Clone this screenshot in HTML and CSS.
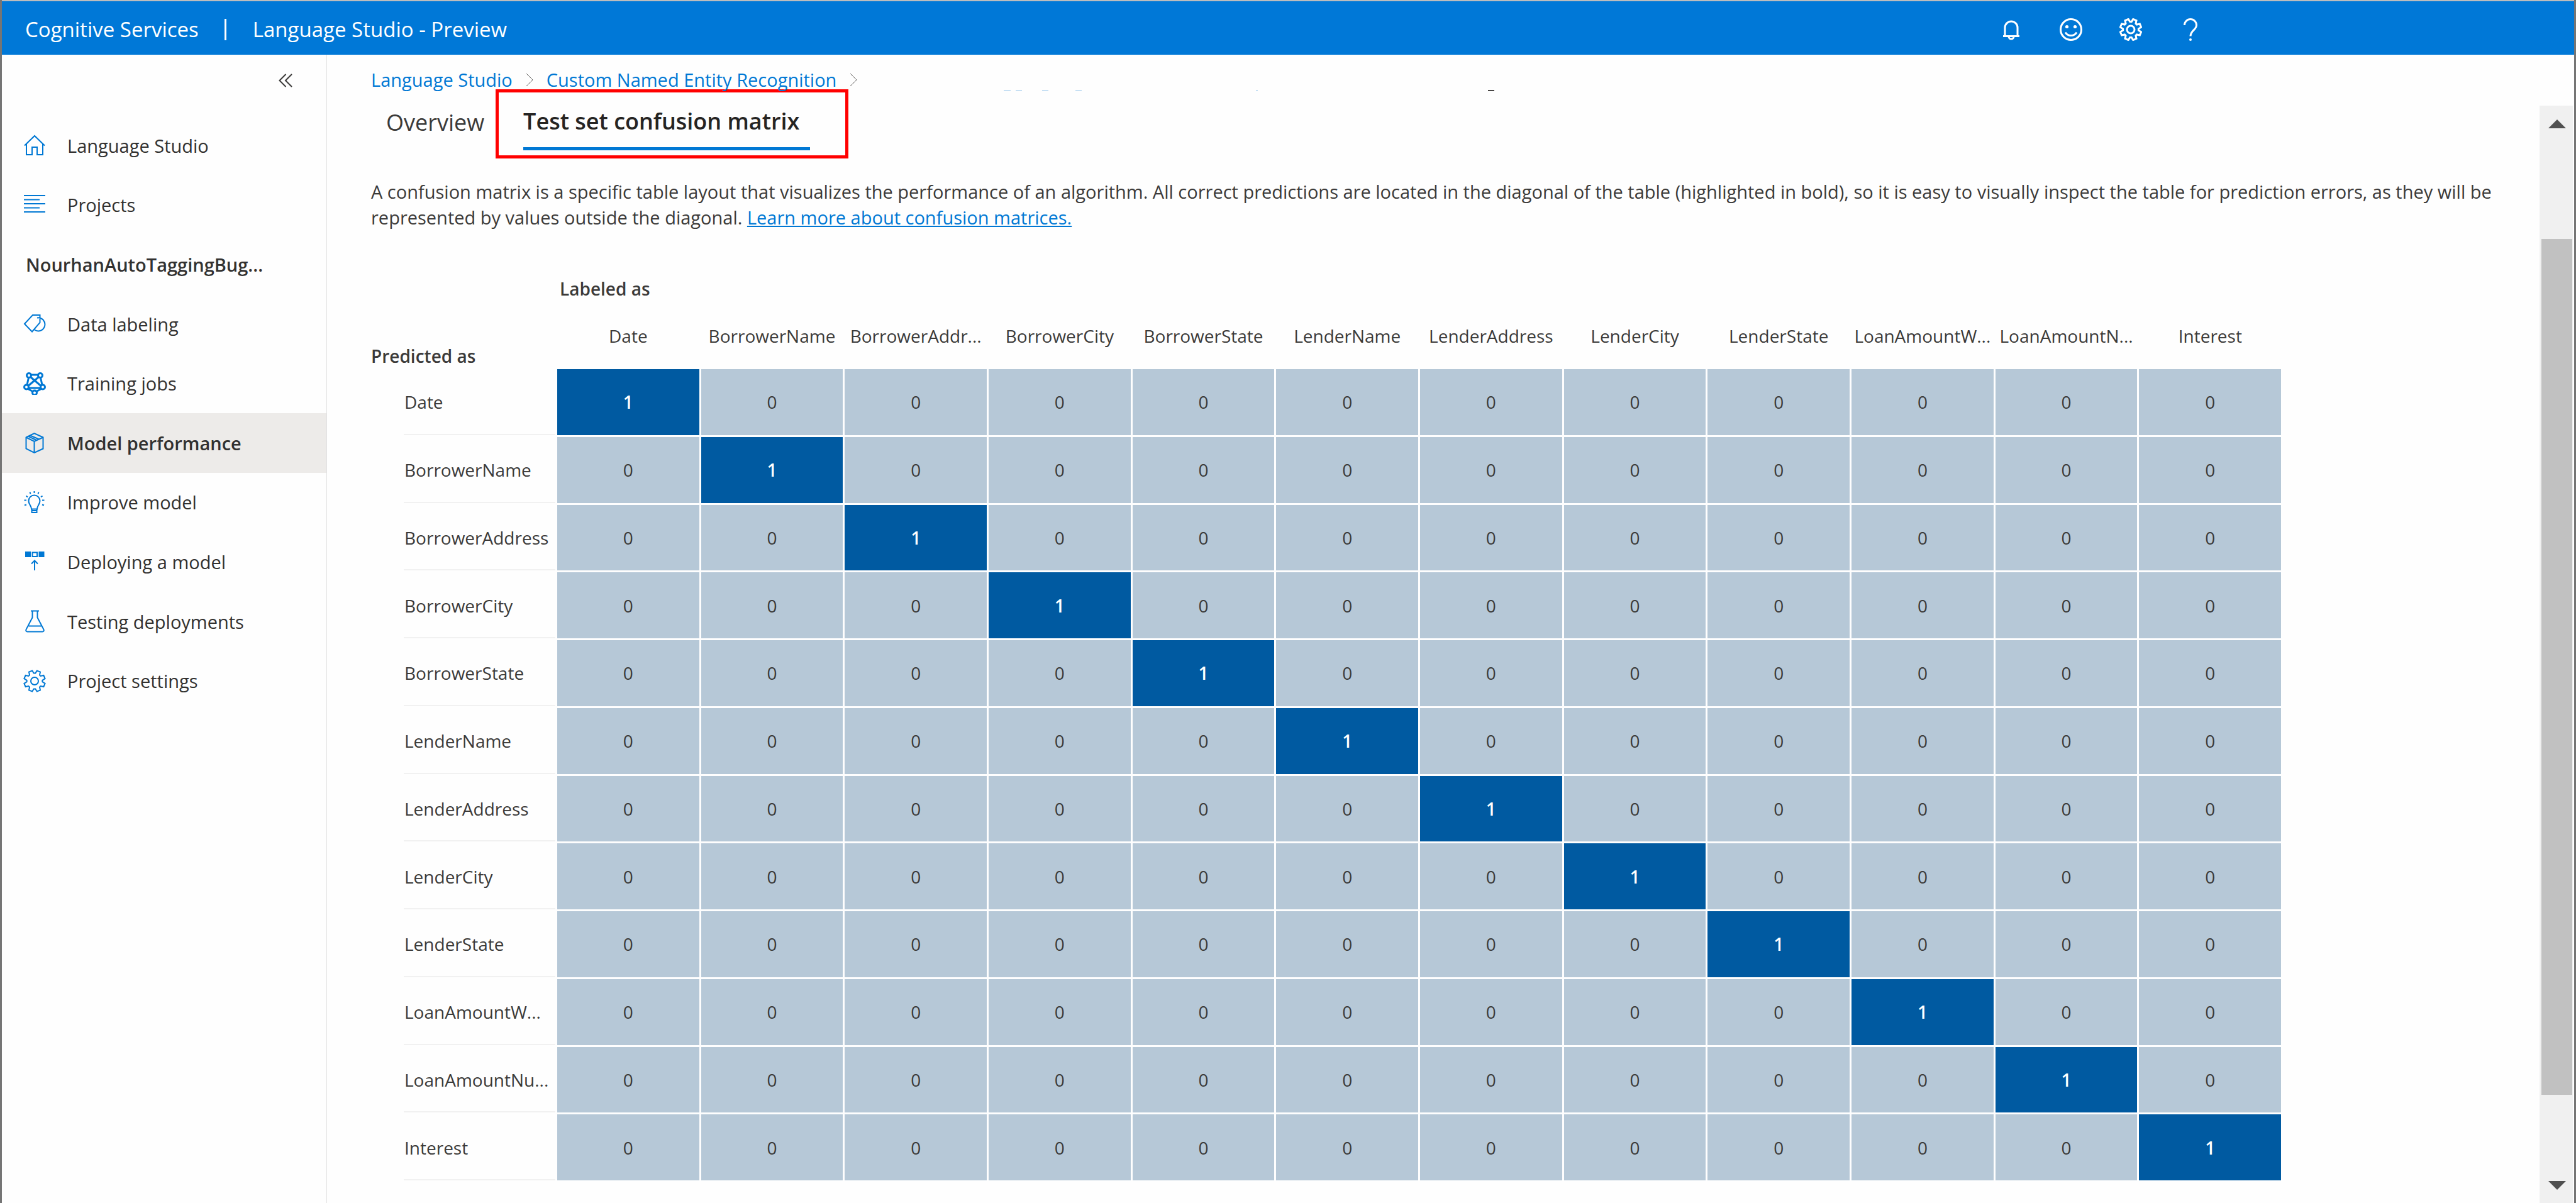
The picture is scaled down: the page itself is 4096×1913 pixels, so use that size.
FILE: index.html
```html
<!DOCTYPE html>
<html lang="en">
<head>
<meta charset="utf-8">
<title>Language Studio - Preview</title>
<link rel="stylesheet" href="styles.css">
</head>
<body>
<svg class="sprite" aria-hidden="true">
  <symbol id="gear" viewBox="0 0 36 36">
    <path d="M19.2 5.6 21.8 1.4 27 3.6 26 8.4 27.6 10 32.4 9 34.6 14.2 30.4 16.8V19.2L34.6 21.8 32.4 27 27.6 26 26 27.6 27 32.4 21.8 34.6 19.2 30.4H16.8L14.2 34.6 9 32.4 10 27.6 8.4 26 3.6 27 1.4 21.8 5.6 19.2V16.8L1.4 14.2 3.6 9 8.4 10 10 8.4 9 3.6 14.2 1.4 16.8 5.6Z"/>
    <circle cx="18" cy="18" r="6"/>
  </symbol>
</svg>
<header class="topbar">
  <a class="brand" href="#">Cognitive Services</a>
  <span class="divider"></span>
  <a class="product" href="#">Language Studio - Preview</a>
  <div class="tools">
    <button type="button" aria-label="Notifications"><svg viewBox="0 0 36 36"><path d="M5 28.500H31M8 28V15a10 10 0 0 1 20 0V28M14 29a4 4 0 0 0 8 0"/></svg></button>
    <button type="button" aria-label="Feedback"><svg viewBox="0 0 36 36"><circle cx="18" cy="18" r="16.500"/><path d="M9 22.500a10.500 10.500 0 0 0 18 0"/><circle class="solid" cx="11.500" cy="13.500" r="2.600"/><circle class="solid" cx="24.500" cy="13.500" r="2.600"/></svg></button>
    <button type="button" aria-label="Settings"><svg viewBox="0 0 36 36"><use href="#gear"/></svg></button>
    <button type="button" aria-label="Help"><svg viewBox="0 0 36 36"><path d="M8.500 11a9.500 9.500 0 0 1 19 0c0 7.500-9.500 8.500-9.500 17.500"/><circle class="solid" cx="18" cy="34" r="2"/></svg></button>
  </div>
</header>
<div class="shell">
  <aside class="sidebar">
    <button class="collapse" type="button" aria-label="Collapse menu"><svg viewBox="0 0 22 22"><path d="M11.500 1 1.500 11l10 10M21 1 11 11l10 10"/></svg></button>
    <nav class="menu">
      <a href="#"><svg viewBox="0 0 36 36"><path d="M2 18.500 18 3l16 15.500M5 16V33h9V21h8V33h9V16"/></svg>Language Studio</a>
      <a href="#"><svg viewBox="0 0 36 36"><path d="M1 3H35M1 9.500H26M1 16H35M1 22.500H26M1 29H35"/></svg>Projects</a>
      <h2>NourhanAutoTaggingBug...</h2>
      <a href="#"><svg viewBox="0 0 36 36"><path d="M2 18 15 4H26.500V16L14 30.500ZM22 8.500a10.500 10.500 0 1 1-4 19"/></svg>Data labeling</a>
      <a href="#"><svg viewBox="0 0 36 36"><g class="thick"><circle cx="9" cy="5" r="3.500"/><circle cx="27" cy="5" r="3.500"/><circle cx="5" cy="23.500" r="3.500"/><circle cx="31" cy="23.500" r="3.500"/><circle cx="18" cy="32.500" r="3.500"/><path d="M12.500 4H23.500M8.500 8.500 6 20M27.500 8.500 30 20M11.500 7.500 28 21.500M24.500 7.500 8 21.500M8.500 25H27.500M7.500 26.500 15 30.500M28.500 26.500 21 30.500"/></g></svg>Training jobs</a>
      <a class="current" href="#" aria-current="page"><svg viewBox="0 0 36 36"><path d="M4.500 9.500 17.500 3 31.500 9.500V27.500L17.500 34 4.500 27.500ZM4.500 9.500 17.500 16 31.500 9.500M17.500 16V34M11 6.500 25 12.500M8 7.800 21 14"/></svg>Model performance</a>
      <a href="#"><svg viewBox="0 0 36 36"><path d="M13 28.500C13 23 8.500 21.500 8.500 15.500a9 9 0 0 1 18 0C26.500 21.500 22 23 22 28.500ZM13.500 28.500V34H21.500V28.500M13.500 31H21.500M17.500 0V3M10.500 1.500 11.500 4.500M24.500 1.500 23.500 4.500M4.500 7.500 7 9.500M30.500 7.500 28 9.500M1.500 14.500H5M33.500 14.500H30M2 22.500 5 21.500M33 22.500 30 21.500"/></svg>Improve model</a>
      <a href="#"><svg viewBox="0 0 36 36"><path class="solid" d="M3 2H12V11H3ZM24.500 2H33.500V11H24.500Z"/><path d="M14.500 3.500H22V10H14.500ZM18 17V32M13 21.500 18 16.500 23 21.500"/></svg>Deploying a model</a>
      <a href="#"><svg viewBox="0 0 36 36"><path d="M12 1.500H25M14.500 2V12L4.500 31Q3.500 34.500 6.500 34.500H30.500Q33.500 34.500 32.500 31L22.500 12V2M8.500 25.500H28.500"/></svg>Testing deployments</a>
      <a href="#"><svg viewBox="0 0 36 36"><use href="#gear"/></svg>Project settings</a>
    </nav>
  </aside>
  <main class="content">
    <nav class="crumbs" aria-label="Breadcrumb">
      <a href="#">Language Studio</a>
      <svg viewBox="0 0 12 22"><path d="M1 1 11 11 1 21"/></svg>
      <a href="#">Custom Named Entity Recognition</a>
      <svg viewBox="0 0 12 22"><path d="M1 1 11 11 1 21"/></svg>
      <svg class="hidden-crumbs" viewBox="0 0 784 4" aria-hidden="true"><path class="pale" d="M0 1H11M19 1H29M61 1H71M114 1H124M401 1H404"/><path class="dark" d="M770 1H780"/></svg>
    </nav>
    <div class="tabs" role="tablist">
      <button type="button" role="tab" aria-selected="false">Overview</button>
      <div class="callout"><button class="selected" type="button" role="tab" aria-selected="true">Test set confusion matrix</button></div>
    </div>
    <p class="intro">A confusion matrix is a specific table layout that visualizes the performance of an algorithm. All correct predictions are located in the diagonal of the table (highlighted in bold), so it is easy to visually inspect the table for prediction errors, as they will be represented by values outside the diagonal. <a href="#">Learn more about confusion matrices.</a></p>
    <table class="matrix">
      <thead>
        <tr class="axis"><td></td><th colspan="12" scope="colgroup">Labeled as</th></tr>
        <tr class="names"><th class="predicted">Predicted as</th><th scope="col">Date</th><th scope="col">BorrowerName</th><th scope="col">BorrowerAddr...</th><th scope="col">BorrowerCity</th><th scope="col">BorrowerState</th><th scope="col">LenderName</th><th scope="col">LenderAddress</th><th scope="col">LenderCity</th><th scope="col">LenderState</th><th scope="col">LoanAmountW...</th><th scope="col">LoanAmountN...</th><th scope="col">Interest</th></tr>
      </thead>
      <tbody>
        <tr><th scope="row">Date</th><td class="hit">1</td><td>0</td><td>0</td><td>0</td><td>0</td><td>0</td><td>0</td><td>0</td><td>0</td><td>0</td><td>0</td><td>0</td></tr>
        <tr><th scope="row">BorrowerName</th><td>0</td><td class="hit">1</td><td>0</td><td>0</td><td>0</td><td>0</td><td>0</td><td>0</td><td>0</td><td>0</td><td>0</td><td>0</td></tr>
        <tr><th scope="row">BorrowerAddress</th><td>0</td><td>0</td><td class="hit">1</td><td>0</td><td>0</td><td>0</td><td>0</td><td>0</td><td>0</td><td>0</td><td>0</td><td>0</td></tr>
        <tr><th scope="row">BorrowerCity</th><td>0</td><td>0</td><td>0</td><td class="hit">1</td><td>0</td><td>0</td><td>0</td><td>0</td><td>0</td><td>0</td><td>0</td><td>0</td></tr>
        <tr><th scope="row">BorrowerState</th><td>0</td><td>0</td><td>0</td><td>0</td><td class="hit">1</td><td>0</td><td>0</td><td>0</td><td>0</td><td>0</td><td>0</td><td>0</td></tr>
        <tr><th scope="row">LenderName</th><td>0</td><td>0</td><td>0</td><td>0</td><td>0</td><td class="hit">1</td><td>0</td><td>0</td><td>0</td><td>0</td><td>0</td><td>0</td></tr>
        <tr><th scope="row">LenderAddress</th><td>0</td><td>0</td><td>0</td><td>0</td><td>0</td><td>0</td><td class="hit">1</td><td>0</td><td>0</td><td>0</td><td>0</td><td>0</td></tr>
        <tr><th scope="row">LenderCity</th><td>0</td><td>0</td><td>0</td><td>0</td><td>0</td><td>0</td><td>0</td><td class="hit">1</td><td>0</td><td>0</td><td>0</td><td>0</td></tr>
        <tr><th scope="row">LenderState</th><td>0</td><td>0</td><td>0</td><td>0</td><td>0</td><td>0</td><td>0</td><td>0</td><td class="hit">1</td><td>0</td><td>0</td><td>0</td></tr>
        <tr><th scope="row">LoanAmountW...</th><td>0</td><td>0</td><td>0</td><td>0</td><td>0</td><td>0</td><td>0</td><td>0</td><td>0</td><td class="hit">1</td><td>0</td><td>0</td></tr>
        <tr><th scope="row">LoanAmountNu...</th><td>0</td><td>0</td><td>0</td><td>0</td><td>0</td><td>0</td><td>0</td><td>0</td><td>0</td><td>0</td><td class="hit">1</td><td>0</td></tr>
        <tr><th scope="row">Interest</th><td>0</td><td>0</td><td>0</td><td>0</td><td>0</td><td>0</td><td>0</td><td>0</td><td>0</td><td>0</td><td>0</td><td class="hit">1</td></tr>
      </tbody>
    </table>
  </main>
  <div class="scrollbar">
    <button type="button" aria-label="Scroll up"><svg viewBox="0 0 28 14"><path d="M0 14 14 0 28 14Z"/></svg></button>
    <span class="before"></span>
    <span class="thumb"></span>
    <span class="after"></span>
    <button type="button" aria-label="Scroll down"><svg viewBox="0 0 28 14"><path d="M0 0H28L14 14Z"/></svg></button>
  </div>
</div>
</body>
</html>
```
FILE: styles.css
```css
* { box-sizing: border-box; }

body {
  display: flex;
  flex-direction: column;
  min-height: 100vh;
  margin: 0;
  border: solid #757575;
  border-width: 0 3px;
  background: #fefefe;
  color: #3b3a39;
  font: 29px/41px "Open Sans", "Noto Sans", sans-serif;
}

a { color: #0078d4; text-decoration: none; }

button {
  padding: 0;
  border: 0;
  background: none;
  color: inherit;
  font: inherit;
}

svg {
  display: block;
  fill: none;
  stroke: currentColor;
  stroke-width: 2;
}

.solid { fill: currentColor; stroke: none; }
.sprite { display: none; }

/* Top bar */
.topbar {
  display: flex;
  align-items: center;
  height: 87px;
  padding: 4px 592px 0 37px;
  border-top: 2px solid #bdbdbd;
  background: #0078d7;
  color: #fff;
  font-size: 33px;
}

.topbar a { color: #fff; }

.divider {
  width: 3px;
  height: 34px;
  margin: 0 42px 0 41px;
  background: #fff;
}

.tools { display: flex; gap: 59px; margin-left: auto; }
.tools button { width: 36px; }
.tools svg { width: 36px; height: 36px; stroke-width: 3; }

.shell { display: flex; flex: 1; }

/* Side menu */
.sidebar {
  display: flex;
  flex-direction: column;
  width: 517px;
  border-right: 1px solid #e1e1e1;
}

.collapse { align-self: flex-end; margin: 30px 54px 45px 0; }
.collapse svg { width: 22px; height: 22px; }

.menu {
  display: grid;
  grid-auto-rows: 1fr;
  height: 946px;
}

.menu a {
  display: flex;
  align-items: center;
  gap: 34px;
  padding-left: 34px;
  color: #323130;
}

.menu svg { width: 36px; height: 36px; color: #0078d4; }
.menu .thick { stroke-width: 3; }
.menu .current { background: #edebe9; font-weight: 600; }

.menu h2 {
  align-self: center;
  margin: 0;
  padding-left: 38px;
  color: #323130;
  font: inherit;
  font-weight: 600;
}

/* Main column */
.content {
  flex: 1;
  padding: 19px 70px 0 70px;
}

.crumbs {
  position: relative;
  display: flex;
  align-items: center;
  gap: 21px;
}

.crumbs svg { width: 12px; height: 22px; color: #605e5c; stroke-width: 1; }

.crumbs .hidden-crumbs {
  position: absolute;
  top: 37px;
  left: 1006px;
  width: 784px;
  height: 4px;
  stroke-width: 2;
}

.pale { stroke: #c7e0f4; }
.dark { stroke: #484644; }

.tabs {
  display: flex;
  align-items: center;
  gap: 18px;
  height: 110px;
  margin: -5px 0 32px;
  padding-left: 24px;
  font-size: 36px;
}

.tabs button { padding-bottom: 6px; }

.callout {
  display: flex;
  align-items: center;
  width: 561px;
  height: 110px;
  padding: 0 0 0 39px;
  border: 5px solid #f00;
}

.tabs .selected {
  width: 456px;
  padding: 17px 0 21px;
  border-bottom: 5px solid #0078d4;
  color: #252423;
  font-weight: 600;
  text-align: left;
  white-space: nowrap;
}

.intro { margin: 0 0 68px; }
.intro a { text-decoration: underline; }

/* Confusion matrix */
.matrix {
  width: calc(90% + 3px);
  height: 1446px;
  margin-left: -3px;
  table-layout: fixed;
  border-spacing: 3px;
  font-size: 28px;
  line-height: 36px;
  text-align: center;
  white-space: nowrap;
}

.matrix td, .matrix th { padding: 0; font-weight: 400; }
.matrix .axis { height: 44px; }
.matrix .axis td { width: 293px; background: none; }

.matrix .axis th {
  padding-left: 4px;
  font-weight: 600;
  text-align: left;
}

.matrix .names { height: 100px; }

.matrix .names th {
  padding-top: 32px;
  vertical-align: top;
}

.matrix .names .predicted {
  padding: 0;
  font-weight: 600;
  text-align: left;
  vertical-align: bottom;
}

.matrix tbody td { background: #b6c8d7; }

.matrix tbody th {
  padding-left: 53px;
  background: linear-gradient(#f1f1f1, #f1f1f1) no-repeat right bottom / calc(100% - 52px) 2px;
  text-align: left;
}

.matrix tbody .hit { background: #005aa1; color: #fff; font-weight: 600; }

/* Scroll bar */
.scrollbar {
  display: flex;
  flex-direction: column;
  width: 53px;
  margin: 81px 2px 0 0;
  padding: 0 1px 0 3px;
  background: #f0f0f0;
}

.scrollbar button {
  display: grid;
  place-items: center;
  height: 57px;
}

.scrollbar svg { width: 28px; height: 14px; fill: #505050; stroke: none; }
.before { flex: 155; }
.thumb { flex: 1361; background: #c1c1c1; }
.after { flex: 115; }
```
